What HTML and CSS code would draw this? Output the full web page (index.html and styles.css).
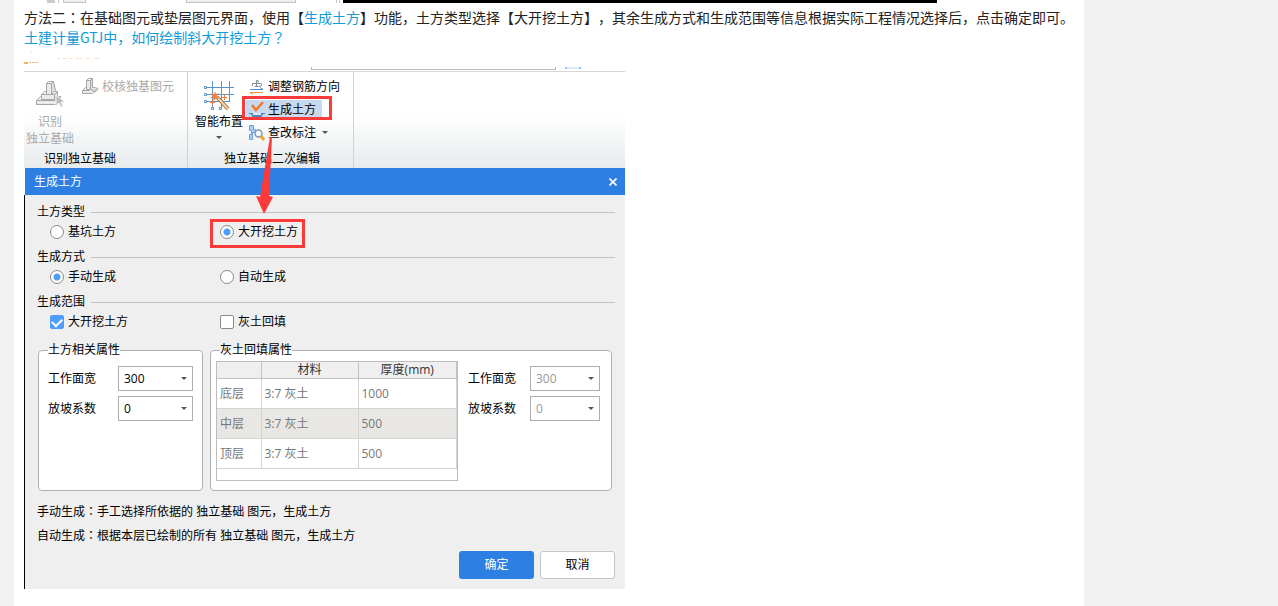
FILE: index.html
```html
<!DOCTYPE html>
<html lang="zh-CN">
<head>
<meta charset="utf-8">
<meta name="viewport" content="width=device-width, initial-scale=1">
<title>生成土方</title>
<link rel="stylesheet" href="styles.css">
</head>
<body>
<main class="article">
  <svg class="strip-top" width="1040" height="7" aria-hidden="true" shape-rendering="crispEdges">
    <path fill="#ccc" d="M23 0h8v3h-8z"/>
    <path fill="#c4c4c4" d="M34 0h1v3h-1zM39 0h23v3H39zM162 0h110v3H162zM312 0h1v3h-1zM315 0h1v3h-1z"/>
    <path fill="#eee" d="M40 0h21v2H40zM163 0h108v2H163z"/>
    <path d="M319 0h594v3H319z"/>
  </svg>
  <p class="copy">方法二<span class="mid">：</span>在基础图元或垫层图元界面，使用【<a href="#generate">生成土方</a>】功能，土方类型选择【大开挖土方】，其余生成方式和生成范围等信息根据实际工程情况选择后，点击确定即可。</p>
  <p class="copy"><a href="#slope">土建计量GTJ中，如何绘制斜大开挖土方<span class="mid">？</span></a></p>

  <section class="figure">
    <svg class="strip" width="601" height="25" aria-hidden="true" shape-rendering="crispEdges">
      <path fill="#f5b060" d="M0 15h4v2H0zM5 15h2v1H5zM8 15h2v1H8zM11 15h3v1h-3z"/>
      <path fill="#fde3c8" d="M6 5h2v1H6zM33 11h3v1h-3zM38 11h5v1h-5zM45 11h4v1h-4zM52 11h6v1h-6zM61 11h5v1h-5zM70 11h6v1h-6z"/>
      <path fill="#bbb" d="M287 20h1v2h243v-2h1v3H287z"/>
      <path fill="#dcebfb" d="M541 20h16v2h-16z"/><path fill="#8fbdf2" d="M541 20h2v2h-2zM555 20h2v2h-2z"/>
      <path fill="#d6d6d6" d="M0 24h601v1H0z"/>
    </svg>

    <div class="ribbon">
      <div class="group group-identify">
        <div class="tools">
          <button class="big muted" type="button" disabled>
            <svg width="30" height="28" viewBox="0 0 30 28" stroke="#a6a6a6" stroke-linejoin="round"><path fill="#f4f4f4" d="M1.500 20.500l4-4h20l-4 4z"/><path fill="#ddd" d="M21.500 20.500l4-4v4l-4 4z"/><path fill="#eaeaea" d="M1.500 20.500h20v4h-20z"/><path fill="#f4f4f4" d="M6.500 14.500l3-3h13l-3 3z"/><path fill="#ddd" d="M19.500 14.500l3-3v4l-3 4z"/><path fill="#eaeaea" d="M6.500 14.500h13v5h-13z"/><path fill="#ddd" d="M16.500 3.500l2-2 2 9-4 4z"/><path fill="#f4f4f4" d="M11.500 3.500l2-2h5l-2 2z"/><path fill="#eaeaea" d="M11.500 3.500h5v11h-5z"/><path fill="#bbb" stroke="#f4f4f4" d="M21 15v11l3-3 2 4 2-1-2-4h4z"/></svg>
            <span>识别<br>独立基础</span>
          </button>
          <button class="small muted" type="button" disabled>
            <svg width="17" height="17" viewBox="0 0 17 17" stroke="#a6a6a6" stroke-linejoin="round"><path fill="#f4f4f4" d="M.5 12.500l3-3h10l-3 3z"/><path fill="#ddd" d="M10.500 12.500l3-3v3l-3 3z"/><path fill="#eaeaea" d="M.5 12.500h10v3H.5z"/><path fill="#ddd" d="M8.500 2.500l2-2v9l-2 2z"/><path fill="#f4f4f4" d="M4.500 2.500l2-2h4l-2 2z"/><path fill="#eaeaea" d="M4.500 2.500h4v9h-4z"/><path fill="none" stroke="#f4f4f4" stroke-width="4" d="M9 11l3 3 4-4"/><path fill="none" stroke="#bbb" stroke-width="2" d="M9 11l3 3 4-4"/></svg>
            <span>校核独基图元</span>
          </button>
        </div>
        <div class="caption">识别独立基础</div>
      </div>
      <div class="group group-edit">
        <div class="tools">
          <button class="big" type="button">
            <svg width="30" height="30" viewBox="0 0 30 30" fill="none" stroke="#5b93c9"><path d="M3 6.500h27M3 13.500h27M3 20.500h22M8.500 0v27M17.500 0v27M25.500 0v21"/><path fill="#fff" d="M.5 5.500h2v2h-2zM.5 12.500h2v2h-2zM.5 19.500h2v2h-2zM7.500 26.500h2v2h-2zM15.500 26.500h2v2h-2z"/><path stroke="#a9764a" stroke-width="4" d="M13 16l11 12"/><path stroke="#f3d2a6" stroke-width="2" d="M13 16l11 12"/><path fill="#f08044" stroke="none" d="M11 10l1 3 3-1-2 3 2 3-3-1-2 3-1-3-3 0 3-2-2-3 3 1z"/><path stroke="#f08044" d="M20.500 14v5M18 16.500h5M8.500 19v5M6 21.500h5"/></svg>
            <span>智能布置</span>
            <i class="arrow"></i>
          </button>
          <div class="stack">
            <button class="small" type="button">
              <svg width="16" height="16" viewBox="0 0 16 16" fill="none"><path stroke="#808b94" d="M7.500 8V1.500q2-1.500 2 2M3.500 7V4.500h8q1.500 0 1 1.500-.5 1.500-3 1.500h-4"/><path stroke="#4d8dc9" d="M1 10.500h13M11 8.500l3 2"/><path stroke="#ef9140" d="M1 13.500h13M4 15.500l-3-2"/></svg>
              <span>调整钢筋方向</span>
            </button>
            <button class="small active" type="button" id="generate">
              <svg width="16" height="16" viewBox="0 0 16 16" fill="none"><path fill="#4f86bd" d="M0 11h16v1h-2l-2 4H4l-2-4H0z"/><path fill="#dceaf6" d="M4 11h8v2H4z"/><path stroke="#f07a28" stroke-width="2.500" d="M3 3l4 5 7-8"/></svg>
              <span>生成土方</span>
            </button>
            <button class="small" type="button">
              <svg width="16" height="16" viewBox="0 0 16 16" fill="none"><path fill="#a9d0f2" stroke="#65a4dc" d="M.5.500h4v4h2v3h-3v7h-3v-5h2v-4h-2z"/><circle cx="9.500" cy="8.500" r="3.500" fill="#f2f8fd" stroke="#8097b5" stroke-width="1.500"/><path stroke="#f4a522" stroke-width="3" d="M12 11l3 4"/></svg>
              <span>查改标注</span>
              <i class="arrow"></i>
            </button>
          </div>
        </div>
        <div class="caption">独立基础二次编辑</div>
      </div>
    </div>

    <form class="dialog">
      <header class="titlebar">
        <h1>生成土方</h1>
        <button type="button" aria-label="关闭"><svg width="8" height="8" viewBox="0 0 8 8" stroke="#fff" stroke-width="1.600"><path d="M.5.500l7 7M7.500.500l-7 7"/></svg></button>
      </header>
      <div class="body">
        <section class="choices">
          <h2>土方类型</h2>
          <div class="options">
            <label><input type="radio" name="type">基坑土方</label>
            <label class="marked"><input type="radio" name="type" checked>大开挖土方</label>
          </div>
        </section>
        <section class="choices">
          <h2>生成方式</h2>
          <div class="options">
            <label><input type="radio" name="mode" checked>手动生成</label>
            <label><input type="radio" name="mode">自动生成</label>
          </div>
        </section>
        <section class="choices">
          <h2>生成范围</h2>
          <div class="options">
            <label><input type="checkbox" checked>大开挖土方</label>
            <label><input type="checkbox">灰土回填</label>
          </div>
        </section>

        <div class="panels">
          <fieldset class="panel panel-soil">
            <legend>土方相关属性</legend>
            <div class="fields">
              <label for="w1">工作面宽</label><span class="pick"><select id="w1"><option>300</option></select></span>
              <label for="s1">放坡系数</label><span class="pick"><select id="s1"><option>0</option></select></span>
            </div>
          </fieldset>
          <fieldset class="panel panel-fill">
            <legend>灰土回填属性</legend>
            <div class="fill">
              <div class="grid">
                <table>
                  <thead><tr><th class="c-name"></th><th class="c-mat">材料</th><th>厚度(mm)</th></tr></thead>
                  <tbody>
                    <tr><td>底层</td><td>3:7 灰土</td><td>1000</td></tr>
                    <tr class="alt"><td>中层</td><td>3:7 灰土</td><td>500</td></tr>
                    <tr><td>顶层</td><td>3:7 灰土</td><td>500</td></tr>
                  </tbody>
                </table>
              </div>
              <div class="fields">
                <label for="w2">工作面宽</label><span class="pick"><select id="w2" disabled><option>300</option></select></span>
                <label for="s2">放坡系数</label><span class="pick"><select id="s2" disabled><option>0</option></select></span>
              </div>
            </div>
          </fieldset>
        </div>

        <div class="notes">
          <p>手动生成<span class="mid">：</span>手工选择所依据的 独立基础 图元，生成土方</p>
          <p>自动生成<span class="mid">：</span>根据本层已绘制的所有 独立基础 图元，生成土方</p>
        </div>
        <div class="actions">
          <button class="ok" type="button">确定</button>
          <button class="cancel" type="button">取消</button>
        </div>
      </div>
    </form>
    <svg class="pointer" width="18" height="78" viewBox="0 0 18 78" aria-hidden="true"><path fill="#fc3a3a" d="M15 0h2l-3 59 4 1-9 17L1 59l4 1z"/></svg>
  </section>
</main>
</body>
</html>
```

FILE: styles.css
```css
* { box-sizing: border-box; }

body {
  margin: 0;
  background: #f1f1f1;
  color: #000;
  font: 12px/18px "Open Sans", "Noto Sans CJK SC", sans-serif;
  text-spacing-trim: space-all;
}

button, select, input { font: inherit; color: inherit; margin: 0; }
button { padding: 0; border: 0; background: none; }
svg { display: block; flex: none; }
p, h1, h2 { margin: 0; font-size: 12px; font-weight: 400; }

.article {
  min-height: 100vh;
  margin: 0 194px 0 14px;
  padding: 0 10px;
  background: #fff;
}
.strip-top { max-width: 100%; }

.copy {
  color: #222;
  font: 14px/20px "Noto Sans CJK SC", sans-serif;
}
.copy a { color: #0e9bd8; text-decoration: none; }

/* Full-width punctuation centred in its cell */
.mid {
  font-family: "Noto Sans CJK JP", sans-serif;
  line-height: 1;
  -webkit-locale: "ja";
}

.figure { position: relative; max-width: 601px; }
.strip { max-width: 100%; }

/* Ribbon */
.ribbon {
  display: flex;
  height: 96px;
  background: linear-gradient(#fff 45%, #e7ebec);
}
.group {
  display: flex;
  flex-direction: column;
  justify-content: space-between;
  border-right: 1px solid #d0d3d4;
}
.group-identify { width: 164px; }
.group-edit { width: 166px; }
.tools { display: flex; align-items: flex-start; white-space: nowrap; }
.caption { line-height: 18px; }
.group-identify .caption { padding-left: 20px; }
.group-edit .caption { padding-left: 36px; }
.big {
  display: flex;
  flex-direction: column;
  align-items: center;
  padding-top: 8px;
}
.group-identify .big { width: 52px; line-height: 17px; gap: 5px; }
.group-edit .big { width: 50px; margin-left: 6px; padding-top: 9px; gap: 2px; }
.small { display: flex; align-items: center; gap: 3px; height: 23px; }
.group-identify .small { margin: 3px 0 0 6px; }
.muted { color: #aaa; }
.arrow {
  border: 3px solid transparent;
  border-top-color: #555;
  border-bottom: 0;
}
.big .arrow { margin-top: 3px; }
.small .arrow { margin-left: 3px; }
.stack { padding: 3px 0 0 5px; }
.active { position: relative; z-index: 0; width: 76px; }
.active::before {
  content: "";
  position: absolute;
  inset: 2px 3px 2px -3px;
  z-index: -1;
  background: #c7d9ef;
}
.active::after {
  content: "";
  position: absolute;
  inset: -2px -7px 1px -7px;
  border: 3px solid #fc3a3a;
}

.pointer { position: absolute; left: 231px; top: 90px; }

/* Dialog */
.titlebar {
  display: flex;
  align-items: center;
  justify-content: space-between;
  height: 27px;
  margin-left: 1px;
  padding: 0 8px 0 9px;
  background: #2d7fe2;
  color: #fff;
}
.body {
  padding: 7px 10px 10px 12px;
  border-left: 1px solid #000;
  background: #efefef;
}
.choices { margin-bottom: 5px; }
.choices h2 { display: flex; align-items: center; gap: 6px; line-height: 20px; }
.choices h2::after { content: ""; flex: 1; height: 1px; background: #c3c3c3; }
.options { display: grid; grid-template-columns: 170px 1fr; padding-left: 13px; }
.options label {
  position: relative;
  display: flex;
  align-items: center;
  justify-self: start;
  gap: 4px;
  height: 20px;
}
.options input {
  appearance: none;
  width: 14px;
  height: 14px;
  border: 1px solid #8a8a8a;
  background: #fff;
}
.options [type="radio"] { border-radius: 50%; }
.options [type="radio"]:checked { background: radial-gradient(circle, #4f9dfa 3px, #fff 4px); }
.options [type="checkbox"] { border-radius: 2px; }
.options [type="checkbox"]:checked {
  display: grid;
  place-items: center;
  border-color: #4f9dfa;
  background: #4f9dfa;
}
.options [type="checkbox"]:checked::before {
  content: "";
  width: 8px;
  height: 5px;
  margin-bottom: 2px;
  border: solid #fff;
  border-width: 0 0 2px 2px;
  transform: rotate(-45deg);
}
.marked::after {
  content: "";
  position: absolute;
  inset: -3px -7px -6px -10px;
  border: 3px solid #fc3a3a;
}

.panels { display: flex; gap: 7px; margin: 9px 3px 0 1px; }
.panel {
  min-width: 0;
  height: 150px;
  margin: 0;
  padding: 0 9px;
  border: 1px solid #b0b0b0;
  border-radius: 4px;
  background: #fff;
}
.panel legend { padding: 0; }
.panel-soil { width: 165px; }
.panel-fill { flex: 1; padding: 0 11px 0 5px; }
.panel-fill legend { margin-left: 4px; }
.fill { display: flex; gap: 10px; }
.fields {
  display: grid;
  flex: 1;
  grid-template-columns: 1fr 75px;
  grid-auto-rows: 25px;
  gap: 5px 0;
  align-items: center;
  padding-top: 7px;
}
.fill .fields { grid-template-columns: 1fr 70px; }
.pick { position: relative; }
.pick::after {
  content: "";
  position: absolute;
  right: 6px;
  top: 11px;
  border: 3px solid transparent;
  border-top-color: #555;
  border-bottom: 0;
  pointer-events: none;
}
.pick select {
  display: block;
  appearance: none;
  width: 100%;
  height: 25px;
  padding: 0 5px;
  border: 1px solid #adadad;
  border-radius: 0;
  background: #fff;
}
.pick select:disabled { color: #999; opacity: 1; }

.grid {
  width: 242px;
  height: 120px;
  margin-top: 2px;
  border: 1px solid #bdbdbd;
}
.grid table { width: 100%; border-collapse: collapse; table-layout: fixed; }
.grid th, .grid td { padding: 0 3px; border: 1px solid #d3d3d3; }
.grid th {
  height: 16px;
  border-top: 0;
  border-color: #c3c3c3;
  background: #efefef;
  color: #333;
  font-weight: 400;
  line-height: 16px;
}
.grid th:first-child, .grid td:first-child { border-left: 0; }
.grid td { height: 30px; color: #777; }
.grid .alt { background: #e8e7e3; }
.c-name { width: 44px; }
.c-mat { width: 97px; }

.notes { padding-top: 9px; line-height: 24px; }
.actions { display: flex; justify-content: flex-end; gap: 6px; margin-top: 3px; }
.actions button { width: 75px; height: 28px; border-radius: 3px; }
.ok { background: #2d7fe2; color: #fff; }
.cancel { border: 1px solid #c6c6c6; background: #fff; }
```
